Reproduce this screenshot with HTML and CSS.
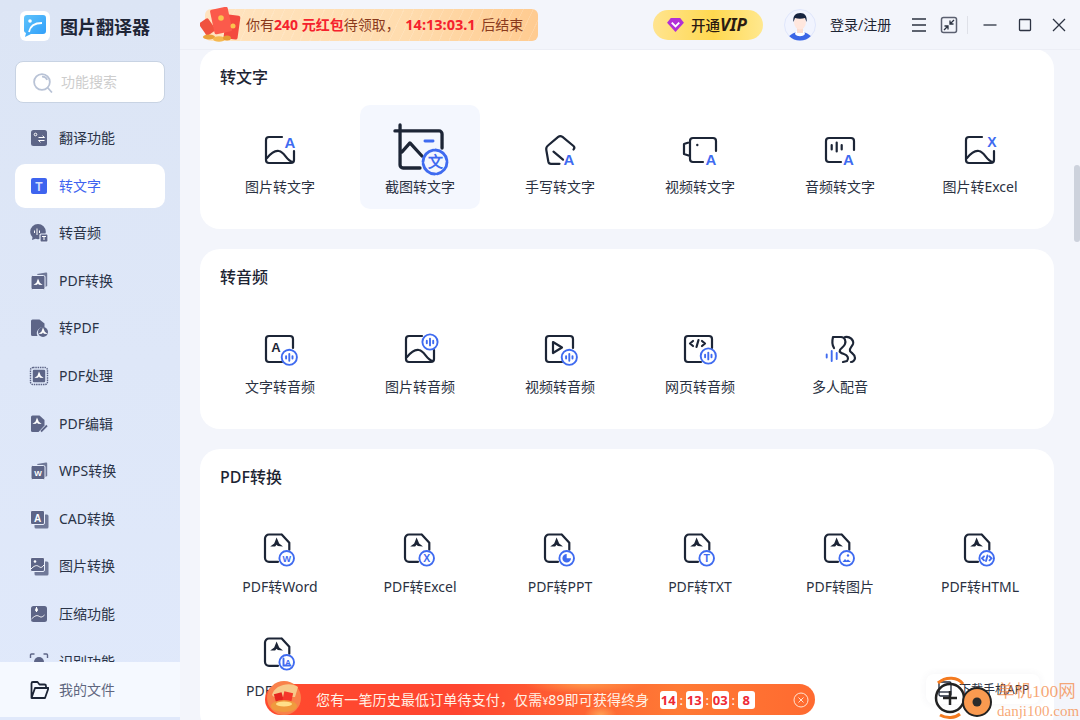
FILE: index.html
```html
<!DOCTYPE html>
<html lang="zh-CN">
<head>
    <meta charset="UTF-8">
    <meta name="viewport" content="width=device-width, initial-scale=1.0">
    <title>图片翻译器</title>
    <link rel="stylesheet" href="styles.css">
</head>
<body>
    <!-- icon sprite -->
    <svg class="sprite" xmlns="http://www.w3.org/2000/svg">
        <defs>
            <g id="b-audio"><circle class="bl" r="7.6" fill="#fff"/><path class="bl" d="M-3.2-1.2v2.4M0-3.4v6.8M3.2-1.2v2.4"/></g>
            <g id="pdf-doc">
                <path class="ln" d="M21.7 4.5H9a4 4 0 0 0-4 4v19.3a4 4 0 0 0 4 4h9M21.7 4.5l7.6 8.2v7"/>
                <path class="df" d="M16.6 7.5l2.6 6 3.8 3-5.200-.4-1.200-1.400-1.500 1.700-4.900.2 4-3z"/>
            </g>
            <g id="mark"><path fill="#fff" d="M0-4.5l1.8 4.3 2.9 2.2-3.8-.3L0 .5-1 1.8l-3.6.2 3-2.2z"/></g>
        </defs>

        <symbol id="ic-pic" viewBox="0 0 40 40">
            <path class="ln" d="M22 7H9a3 3 0 0 0-3 3v20a3 3 0 0 0 3 3h22a3 3 0 0 0 3-3V21"/>
            <path class="ln" d="M7 28c4-5 8-8 12-7 6 1 7 10 14 11"/>
        </symbol>
        <symbol id="ic-crop" viewBox="0 0 40 40">
            <path class="ln" d="M3.3 7.3h29.4a2 2 0 0 1 2 2v9.4M6.7 3.3V30a2 2 0 0 0 2 2H20M8 21.3l5.3-6 8 8.7"/>
            <path class="bl" d="M23.3 14h5.4"/>
            <circle class="bl" cx="30" cy="28" r="8" stroke-dasharray="11 1.6"/>
            <text class="lt" x="30" y="31.6" font-size="10">文</text>
        </symbol>
        <symbol id="ic-hand" viewBox="0 0 40 40">
            <path class="ln" d="M33.5 19.5c1-1 1-2.500 0-3.500l-11-9.200c-1.500-1-3-1-4.300 0L8 15.500c-1.500 1.200-2 3-1.700 4.500l2 11.500c.3 1.500 1.200 2.300 2.700 2.300h8.500"/>
            <path class="ln" d="M13.500 21.700l9.500 8"/>
            <text class="lt" x="29" y="34.500" font-size="15">A</text>
        </symbol>
        <symbol id="ic-video" viewBox="0 0 40 40">
            <path class="ln" d="M10 26.500V11a3 3 0 0 1 3-3h20a3 3 0 0 1 3 3v10M10 26.500V29a3 3 0 0 0 3 3h10M10 12l-6 2v10l6 2"/>
            <circle cx="17.300" cy="15" r="1.200" class="df"/>
            <text class="lt" x="31" y="34.500" font-size="15">A</text>
        </symbol>
        <symbol id="ic-sound" viewBox="0 0 40 40">
            <path class="ln" d="M34 20v-9a3 3 0 0 0-3-3H9a3 3 0 0 0-3 3v18a3 3 0 0 0 3 3h12M11.700 15v4.500M16.700 12.500v9M21.700 15v4.500"/>
            <text class="lt" x="28.500" y="34.500" font-size="15">A</text>
        </symbol>
        <symbol id="ic-frame" viewBox="0 0 40 40">
            <path class="ln" d="M22 32H9a3 3 0 0 1-3-3V9a3 3 0 0 1 3-3h21a3 3 0 0 1 3 3v9"/>
        </symbol>
        <symbol id="ic-voices" viewBox="0 0 40 40">
            <path class="ln" d="M13 7h8c4 0 5 4 4 7-1 3-4 4-5 6-1 2 1 3 4 4 4 1 5 5 3 7l-4 1M13 7c-1 4-1 8 1 11M25 7c5-1 9 3 8 7-1 3-4 4-3 7 1 2 5 3 5 7 0 2-2 4-4 4"/>
            <path class="bl" d="M6.700 24.500v3M11.700 21v10M16.700 23v6"/>
        </symbol>

        <!-- sidebar icons -->
        <symbol id="s-trans" viewBox="0 0 20 20">
            <rect class="sf" x="2" y="2" width="16" height="16" rx="2.500"/>
            <circle cx="6.500" cy="6.500" r="1.300" fill="none" stroke="#fff"/>
            <path fill="none" stroke="#fff" d="M9.500 9.500h6l-2-1.800M15.500 12.500h-6l2 1.800"/>
        </symbol>
        <symbol id="s-text" viewBox="0 0 20 20">
            <rect x="2" y="2" width="16" height="16" rx="2" fill="#3e64ef"/>
            <text x="10" y="14.500" font-size="12" fill="#d5dffc" class="st">T</text>
        </symbol>
        <symbol id="s-audio" viewBox="0 0 20 20">
            <path class="sf" d="M9 1a7.800 7.800 0 0 0-7.800 7.800c0 2.200 1 4 2.300 5.200L3 17l3.500-1.200c1 .3 1.700.4 2.500.4 4.300 0 7.800-3 7.800-7.400A7.800 7.800 0 0 0 9 1z"/>
            <path fill="none" stroke="#fff" d="M5.500 7.500v2.500M8 5.500v6.500M10.500 7.500v2.500"/>
            <rect x="11" y="11" width="8" height="8" rx="1" class="sf" stroke="#e8eefb" stroke-width="1.200"/>
            <path fill="none" stroke="#fff" d="M13 13.500h4M15 13.500v3.500"/>
        </symbol>
        <symbol id="s-pdf" viewBox="0 0 20 20">
            <path class="sf" d="M8 3l9-1.500a1 1 0 0 1 1.200 1V15l-2 1z" opacity=".85"/>
            <rect class="sf" x="2" y="4.500" width="14" height="14" rx="1.500" stroke="#e8eefb"/>
            <use href="#mark" x="9" y="12"/>
        </symbol>
        <symbol id="s-topdf" viewBox="0 0 20 20">
            <path class="sf" d="M3.500 1.500h7l5 4v4a6 6 0 0 0-7 8.500h-5a1.500 1.500 0 0 1-1.500-1.500V3a1.500 1.500 0 0 1 1.500-1.500z"/>
            <circle class="sf" cx="14" cy="14" r="5"/>
            <use href="#mark" x="14" y="14"/>
        </symbol>
        <symbol id="s-chip" viewBox="0 0 20 20">
            <rect x="1.500" y="1.500" width="17" height="17" rx="2.500" fill="none" stroke="#5d6587" stroke-width="1.400" stroke-dasharray="1.500 .8"/>
            <rect class="sf" x="3.800" y="3.800" width="12.400" height="12.400" rx="1.200"/>
            <use href="#mark" x="10" y="10"/>
        </symbol>
        <symbol id="s-edit" viewBox="0 0 20 20">
            <path class="sf" d="M3.500 1.500h7l5 4.500v5.500l-6 6.500h-6A1.500 1.500 0 0 1 2 16.500V3a1.500 1.500 0 0 1 1.500-1.500z"/>
            <use href="#mark" x="8" y="8"/>
            <path fill="none" stroke="#5d6587" stroke-width="1.800" d="M12 17.500l6-6"/>
        </symbol>
        <symbol id="s-wps" viewBox="0 0 20 20">
            <path class="sf" d="M8 3l9-1.500a1 1 0 0 1 1.200 1V15l-2 1z" opacity=".85"/>
            <rect class="sf" x="2" y="4.500" width="14" height="14" rx="1.500" stroke="#e8eefb"/>
            <text x="9" y="15" font-size="8" fill="#fff" class="st">W</text>
        </symbol>
        <symbol id="s-cad" viewBox="0 0 20 20">
            <rect class="sf" x="5.500" y="5.500" width="14" height="14" rx="1.500" opacity=".85"/>
            <rect class="sf" x="1.500" y="1.500" width="14" height="14" rx="1.500" stroke="#e8eefb"/>
            <text x="8.500" y="12.500" font-size="10" fill="#fff" class="st">A</text>
        </symbol>
        <symbol id="s-image" viewBox="0 0 20 20">
            <rect class="sf" x="5.500" y="5.500" width="14" height="14" rx="1.500" opacity=".85"/>
            <rect class="sf" x="1.500" y="1.500" width="14" height="14" rx="1.500" stroke="#e8eefb"/>
            <circle cx="6" cy="5.500" r="1.300" fill="#fff"/>
            <path fill="none" stroke="#fff" d="M2 13c3-3 5-4 7-3s3 3 6-1"/>
        </symbol>
        <symbol id="s-zip" viewBox="0 0 20 20">
            <rect class="sf" x="2" y="2" width="16" height="16" rx="2.500"/>
            <path fill="none" stroke="#fff" d="M2.500 15c3-3 5-4 7-3s3 2 6-1M7.500 3v5"/>
            <rect x="6.200" y="4.500" width="2.600" height="2.600" fill="#fff"/>
        </symbol>
        <symbol id="s-scan" viewBox="0 0 20 20">
            <path fill="none" stroke="#5d6587" stroke-width="1.400" d="M1.500 6V3a1 1 0 0 1 1-1h3M14.500 2h3a1 1 0 0 1 1 1v3"/>
            <circle cx="10" cy="10" r="5" class="sf"/>
        </symbol>
    </svg>

    <div class="app">
        <aside class="sidebar">
            <div class="brand">
                <svg class="brand-logo" viewBox="0 0 30 30">
                    <defs><linearGradient id="lg" x1="0" y1="0" x2="1" y2="1"><stop offset="0" stop-color="#5ec3fb"/><stop offset="1" stop-color="#2f9dfa"/></linearGradient></defs>
                    <rect width="30" height="30" rx="6" fill="#fff"/>
                    <path d="M7 4h16a3 3 0 0 1 3 3v13a3 3 0 0 1-3 3H11l-6 3 1-4a3 3 0 0 1-2-2V7a3 3 0 0 1 3-3z" fill="url(#lg)"/>
                    <circle cx="10" cy="10" r="1.800" fill="#fff"/>
                    <path d="M9 21c1-6 6-9 13-9" fill="none" stroke="#fff" stroke-width="1.800"/>
                </svg>
                <span class="brand-name">图片翻译器</span>
            </div>
            <div class="search">
                <svg class="search-icon" viewBox="0 0 20 20"><circle cx="9.500" cy="9.500" r="7.500"/><path d="M15 15l4 4.500M9.500 4.500a5 5 0 0 1 5 3"/></svg>
                <span class="lift">功能搜索</span>
            </div>
            <nav class="nav">
                <a class="nav-item"><svg class="nav-icon"><use href="#s-trans"/></svg><span class="lift">翻译功能</span></a>
                <a class="nav-item active"><svg class="nav-icon"><use href="#s-text"/></svg><span class="lift">转文字</span></a>
                <a class="nav-item"><svg class="nav-icon"><use href="#s-audio"/></svg><span class="lift">转音频</span></a>
                <a class="nav-item"><svg class="nav-icon"><use href="#s-pdf"/></svg><span class="lift">PDF转换</span></a>
                <a class="nav-item"><svg class="nav-icon"><use href="#s-topdf"/></svg><span class="lift">转PDF</span></a>
                <a class="nav-item"><svg class="nav-icon"><use href="#s-chip"/></svg><span class="lift">PDF处理</span></a>
                <a class="nav-item"><svg class="nav-icon"><use href="#s-edit"/></svg><span class="lift">PDF编辑</span></a>
                <a class="nav-item"><svg class="nav-icon"><use href="#s-wps"/></svg><span class="lift">WPS转换</span></a>
                <a class="nav-item"><svg class="nav-icon"><use href="#s-cad"/></svg><span class="lift">CAD转换</span></a>
                <a class="nav-item"><svg class="nav-icon"><use href="#s-image"/></svg><span class="lift">图片转换</span></a>
                <a class="nav-item"><svg class="nav-icon"><use href="#s-zip"/></svg><span class="lift">压缩功能</span></a>
                <a class="nav-item"><svg class="nav-icon"><use href="#s-scan"/></svg><span class="lift">识别功能</span></a>
            </nav>
            <div class="my-files">
                <svg class="nav-icon" viewBox="0 0 20 20"><path d="M2.500 18V3.500A1.500 1.500 0 0 1 4 2h4.500l2 2.500h5A1.500 1.500 0 0 1 17 6v2M2.500 18h13.500L19.500 8H6z" fill="none" stroke="#1c2536" stroke-width="1.800" stroke-linejoin="round"/></svg>
                <span class="lift">我的文件</span>
            </div>
        </aside>

        <main class="main">
            <header class="topbar">
                <div class="coupon">
                    <svg class="coupon-art" viewBox="0 0 46 36">
                        <rect x="2" y="12" width="11" height="15" rx="2" fill="#f0523f" transform="rotate(-35 8 20)"/>
                        <rect x="25" y="8" width="14" height="24" rx="2" fill="#f4493e" transform="rotate(8 32 20)"/>
                        <rect x="12" y="1" width="18" height="25" rx="2" fill="#fb5a4b" transform="rotate(-12 21 13)"/>
                        <circle cx="21" cy="11" r="2.800" fill="#fbc34f"/>
                        <circle cx="33" cy="19" r="2.500" fill="#fbc34f"/>
                        <ellipse cx="9" cy="30" rx="6" ry="2.500" fill="#eaa23a"/>
                        <ellipse cx="19" cy="32" rx="6" ry="2.800" fill="#f5b950"/>
                        <ellipse cx="27" cy="31" rx="4" ry="2.500" fill="#e79b35"/>
                    </svg>
                    <span class="coupon-text lift">你有<b>240 元红包</b>待领取， <b class="coupon-time">14:13:03.1</b> 后结束</span>
                </div>
                <div class="vip">
                    <svg class="vip-icon" viewBox="0 0 18 16"><path d="M4 1h10l4 5-9 10L0 6z" fill="#b22fd6"/><path d="M5 6l4 4 4-4" fill="none" stroke="#fff" stroke-width="2"/></svg>
                    <span>开通<i>VIP</i></span>
                </div>
                <svg class="avatar" viewBox="0 0 32 32">
                    <clipPath id="av"><circle cx="16" cy="16" r="15.500"/></clipPath>
                    <circle cx="16" cy="16" r="15.500" fill="#f1f4fe" stroke="#dfe6fb"/>
                    <g clip-path="url(#av)">
                        <path d="M3 32c1-6 6-8 10-9h6c4 1 9 3 10 9z" fill="#3b66e6"/>
                        <path d="M11 25c2 3 8 3 10 0l-1-3h-8z" fill="#fff"/>
                        <rect x="13" y="17" width="6" height="7" fill="#fbdcd0"/>
                        <ellipse cx="16" cy="13" rx="6" ry="7.500" fill="#ffe7de"/>
                        <path d="M9.500 13c-1-6 2-9 7-9 4 0 7 3 6 9l-1.500-4c-3 1-7 1-10 0z" fill="#15233f"/>
                    </g>
                </svg>
                <span class="login lift">登录/注册</span>
                <svg class="ctl ctl-menu" viewBox="0 0 20 20"><path d="M3 4h14M3 10h14M3 16h14"/></svg>
                <svg class="ctl ctl-shrink" viewBox="0 0 20 20"><rect x="2.500" y="2.500" width="15" height="15" rx="2" stroke="#5b6070" stroke-width="1.500"/><path d="M15 5l-3.500 3.500M11 5.500V9h3.500M5 15l3.500-3.500M9 14.500V11H5.500"/></svg>
                <span class="ctl-sep"></span>
                <svg class="ctl ctl-min" viewBox="0 0 20 20"><path d="M3.500 10h13"/></svg>
                <svg class="ctl ctl-max" viewBox="0 0 20 20"><rect x="4.500" y="4.500" width="11" height="11" rx=".8"/></svg>
                <svg class="ctl ctl-close" viewBox="0 0 20 20"><path d="M4 4l12 12M16 4L4 16"/></svg>
            </header>

            <div class="content">
                <div class="cards">
                    <section class="card">
                        <h2>转文字</h2>
                        <div class="tools">
                            <a class="tool"><svg class="tool-icon" viewBox="0 0 40 40"><use href="#ic-pic"/><text class="lt" x="30" y="17.500" font-size="15">A</text></svg><span>图片转文字</span></a>
                            <a class="tool hover"><svg class="tool-icon"><use href="#ic-crop"/></svg><span>截图转文字</span></a>
                            <a class="tool"><svg class="tool-icon"><use href="#ic-hand"/></svg><span>手写转文字</span></a>
                            <a class="tool"><svg class="tool-icon"><use href="#ic-video"/></svg><span>视频转文字</span></a>
                            <a class="tool"><svg class="tool-icon"><use href="#ic-sound"/></svg><span>音频转文字</span></a>
                            <a class="tool"><svg class="tool-icon" viewBox="0 0 40 40"><use href="#ic-pic"/><text class="lt" x="32" y="17" font-size="14">X</text></svg><span>图片转Excel</span></a>
                        </div>
                    </section>

                    <section class="card">
                        <h2>转音频</h2>
                        <div class="tools">
                            <a class="tool"><svg class="tool-icon" viewBox="0 0 40 40"><use href="#ic-frame"/><text class="dt" x="16" y="21.500" font-size="13">A</text><use href="#b-audio" x="29.300" y="27.300"/></svg><span>文字转音频</span></a>
                            <a class="tool"><svg class="tool-icon" viewBox="0 0 40 40"><use href="#ic-pic" y="-1"/><use href="#b-audio" x="30" y="12"/></svg><span>图片转音频</span></a>
                            <a class="tool"><svg class="tool-icon" viewBox="0 0 40 40"><use href="#ic-frame"/><path class="ln" d="M13 12l9 5.500-9 5.500z"/><use href="#b-audio" x="29.300" y="27.300"/></svg><span>视频转音频</span></a>
                            <a class="tool"><svg class="tool-icon" viewBox="0 0 40 40"><use href="#ic-frame" x="-1"/><path class="ln" stroke-width="1.800" d="M13 11l-3 2.500 3 2.500M22 11l3 2.500-3 2.500M18.500 10l-2 7"/><use href="#b-audio" x="28.300" y="26"/></svg><span>网页转音频</span></a>
                            <a class="tool"><svg class="tool-icon"><use href="#ic-voices"/></svg><span>多人配音</span></a>
                        </div>
                    </section>

                    <section class="card">
                        <h2>PDF转换</h2>
                        <div class="tools">
                            <a class="tool"><svg class="tool-icon" viewBox="0 0 40 40"><use href="#pdf-doc"/><circle class="bl" cx="26.700" cy="28.300" r="7.300" fill="#fff"/><text class="lt" x="26.700" y="31.500" font-size="9">W</text></svg><span>PDF转Word</span></a>
                            <a class="tool"><svg class="tool-icon" viewBox="0 0 40 40"><use href="#pdf-doc"/><circle class="bl" cx="26.700" cy="28.300" r="7.300" fill="#fff"/><text class="lt" x="26.700" y="32" font-size="10.500">X</text></svg><span>PDF转Excel</span></a>
                            <a class="tool"><svg class="tool-icon" viewBox="0 0 40 40"><use href="#pdf-doc"/><circle class="bl" cx="26.700" cy="28.300" r="7.300" fill="#fff"/><path class="bf" d="M26.700 24a4.300 4.300 0 1 0 4.300 4.300h-4.300z"/></svg><span>PDF转PPT</span></a>
                            <a class="tool"><svg class="tool-icon" viewBox="0 0 40 40"><use href="#pdf-doc"/><circle class="bl" cx="26.700" cy="28.300" r="7.300" fill="#fff"/><text class="lt" x="26.700" y="32" font-size="10.500">T</text></svg><span>PDF转TXT</span></a>
                            <a class="tool"><svg class="tool-icon" viewBox="0 0 40 40"><use href="#pdf-doc"/><circle class="bl" cx="26.700" cy="28.300" r="7.300" fill="#fff"/><path class="bf" d="M22.500 32l2.500-3 1.500 1.500 1.500-1 3 2.500z"/><circle class="bf" cx="28" cy="25.500" r="1.200"/></svg><span>PDF转图片</span></a>
                            <a class="tool"><svg class="tool-icon" viewBox="0 0 40 40"><use href="#pdf-doc"/><circle class="bl" cx="26.700" cy="28.300" r="7.300" fill="#fff"/><path class="bl" stroke-width="1.300" d="M24 26.300l-2 2 2 2M29.500 26.300l2 2-2 2M27.500 25.500l-1.500 5.500"/></svg><span>PDF转HTML</span></a>
                            <a class="tool"><svg class="tool-icon" viewBox="0 0 40 40"><use href="#pdf-doc"/><circle class="bl" cx="26.700" cy="28.300" r="7.300" fill="#fff"/><path class="bl" stroke-width="1" d="M23.500 24.500v7h7"/><text class="lt" x="28" y="30.500" font-size="7.500">A</text></svg><span>PDF转长图</span></a>
                        </div>
                    </section>
                </div>
            </div>

            <div class="scrollbar"></div>
        </main>

        <!-- floating bits over the page -->
        <div class="promo">
            <svg class="promo-art" viewBox="0 0 38 38">
                <circle cx="19" cy="20" r="17" fill="#f9814a"/>
                <path d="M7 17c2-10 18-14 26-8l-3 10H9z" fill="#f7c98a"/>
                <rect x="10" y="15" width="8" height="10" fill="#e5261f" transform="rotate(-15 14 20)"/>
                <rect x="18" y="14" width="9" height="11" fill="#f5382a" transform="rotate(12 22 20)"/>
                <ellipse cx="19" cy="28" rx="13" ry="6" fill="#f09a3e"/>
                <ellipse cx="19" cy="26" rx="8" ry="2.500" fill="#ffe08a"/>
            </svg>
            <span class="promo-text lift">您有一笔历史最低订单待支付，仅需<small>¥</small>89即可获得终身</span>
            <div class="timer">
                <b>14</b><i>:</i><b>13</b><i>:</i><b>03</b><i>:</i><b>8</b>
            </div>
            <svg class="promo-close" viewBox="0 0 16 16"><circle cx="8" cy="8" r="7"/><path d="M5.500 5.500l5 5M10.500 5.500l-5 5"/></svg>
        </div>

        <div class="app-chip">
            <svg class="chip-icon" viewBox="0 0 16 16"><rect x="2" y="1" width="12" height="14" rx="1.500"/><path d="M2 11h12"/></svg>
            <span>下载手机APP</span>
        </div>

        <div class="watermark">
            <svg class="wm-logo" viewBox="0 0 67 45">
                <path d="M8 8c8-7 20-6 25 1M10 40c7 4 15 3 20-1" fill="none" stroke="#f47a1f" stroke-width="3"/>
                <circle cx="20" cy="23" r="14" fill="none" stroke="#222" stroke-width="2.500"/>
                <path d="M20 16v14M13 23h14" stroke="#222" stroke-width="2.500"/>
                <circle cx="47" cy="27" r="14" fill="#fa9a50" stroke="#222" stroke-width="2"/>
                <circle cx="47" cy="27" r="4.500" fill="#2b2b2b"/>
            </svg>
            <div class="wm-text">
                <span class="wm-title">单机100网</span>
                <span class="wm-url">danji100.com</span>
            </div>
        </div>
    </div>
</body>
</html>
```

FILE: styles.css
```css
* {
    box-sizing: border-box;
}
html, body {
    margin: 0;
    padding: 0;
    height: 100%;
    overflow: hidden;
}
body {
    font-family: "Noto Sans", "Noto Sans CJK SC", sans-serif;
    font-size: 14px;
    color: #1d2433;
}
.sprite {
    display: none;
}
/* this font sits a pixel low next to the icons */
.lift {
    padding-bottom: 2px;
}

/* svg parts, used from the sprite */
.ln {
    fill: none;
    stroke: #1c2536;
    stroke-width: 2.2;
    stroke-linecap: round;
    stroke-linejoin: round;
}
.bl {
    stroke: #3f6bf0;
    stroke-width: 1.9;
    stroke-linecap: round;
    fill: none;
}
.bf {
    fill: #3f6bf0;
}
.df {
    fill: #1c2536;
}
.sf {
    fill: #5d6587;
}
.lt, .dt, .st {
    font-family: "Liberation Sans", sans-serif;
    font-weight: 700;
    text-anchor: middle;
    stroke: none;
}
.lt {
    fill: #3f6bf0;
}
.dt {
    fill: #1c2536;
}

.app {
    position: relative;
    display: flex;
    width: 1080px;
    height: 720px;
    overflow: hidden;
    background-color: #f3f5fb;
}

/* sidebar */
.sidebar {
    display: flex;
    flex-direction: column;
    flex: 0 0 180px;
    padding-bottom: 3px;
    background: linear-gradient(180deg, #dce5f5 0%, #e0e9fb 100%);
}
.brand {
    display: flex;
    align-items: center;
    gap: 10px;
    height: 51px;
    padding-left: 20px;
}
.brand-logo {
    width: 30px;
    height: 30px;
}
.brand-name {
    font-size: 18px;
    font-weight: 700;
    color: #1e2536;
}
.search {
    display: flex;
    align-items: center;
    gap: 8px;
    height: 42px;
    margin: 10px 15px 13px;
    padding-left: 16px;
    background-color: #fff;
    border: 1px solid #c8d3e3;
    border-radius: 8px;
    color: #cdcdcd;
}
.search-icon {
    width: 21px;
    height: 21px;
    fill: none;
    stroke: #b9c3d6;
    stroke-width: 1.700;
}
.nav {
    flex: 1;
    min-height: 0;
    overflow: hidden;
    display: flex;
    flex-direction: column;
    gap: 3.600px;
    padding: 0 15px;
}
.nav-item {
    flex: 0 0 44px;
    display: flex;
    align-items: center;
    gap: 10px;
    padding-left: 14px;
    border-radius: 10px;
    color: #2a3347;
}
.nav-item.active {
    background-color: #fff;
    color: #3e64ef;
}
.nav-icon {
    width: 20px;
    height: 20px;
    flex: none;
}
.my-files {
    flex: 0 0 55px;
    display: flex;
    align-items: center;
    gap: 10px;
    padding-left: 29px;
    background-color: #f5f9ff;
    color: #5f6780;
}

/* main column */
.main {
    position: relative;
    flex: 1;
    min-width: 0;
    display: flex;
    flex-direction: column;
}
.topbar {
    flex: 0 0 50px;
    display: flex;
    align-items: center;
    padding-left: 25px;
    border-bottom: 1px solid #eceef5;
}
.coupon {
    display: flex;
    align-items: center;
    width: 333px;
    height: 32px;
    background:
        repeating-linear-gradient(115deg, rgba(255, 255, 255, 0.14) 0 1px, transparent 1px 9px),
        linear-gradient(90deg, #ffe4c0 0%, #ffdcae 60%, #ffcb90 100%);
    border-radius: 6px;
    color: #8a3a1c;
}
.coupon-art {
    flex: none;
    width: 46px;
    height: 36px;
    margin-left: -5px;
}
.coupon-text {
    white-space: pre;
}
.coupon-text b {
    color: #f5222d;
    font-weight: 700;
}
.coupon-text .coupon-time {
    margin: 0 2px;
    font-size: 14.500px;
}
.vip {
    display: flex;
    align-items: center;
    gap: 7px;
    width: 110px;
    height: 30px;
    margin-left: 115px;
    padding-left: 14px;
    border-radius: 15px;
    background: linear-gradient(90deg, #ffe48f 0%, #ffd850 55%, #ffe88f 100%);
    font-size: 14.500px;
    font-weight: 500;
    color: #2b1b12;
}
.vip-icon {
    width: 17px;
    height: 15px;
}
.vip i {
    font-size: 17px;
    font-weight: 700;
}
.avatar {
    width: 32px;
    height: 32px;
    margin-left: 21px;
}
.login {
    margin-left: 14px;
    color: #1d2433;
    white-space: nowrap;
}
.ctl {
    flex: none;
    width: 20px;
    height: 20px;
    fill: none;
    stroke: #2c3342;
    stroke-width: 1.300;
}
.ctl-menu {
    margin-left: 18px;
}
.ctl-shrink {
    margin-left: 10px;
}
.ctl-sep {
    width: 1px;
    height: 18px;
    margin-left: 8px;
    background-color: #dfe1e8;
}
.ctl-min {
    margin-left: 12px;
}
.ctl-max {
    margin-left: 15px;
}
.ctl-close {
    margin-left: 14px;
}

.content {
    flex: 1;
    min-height: 0;
    overflow: hidden;
    padding: 0 26px 0 20px;
}
.cards {
    display: flex;
    flex-direction: column;
    gap: 20px;
    margin-top: -1px;
}
.card {
    padding: 0 20px 20px;
    background-color: #fff;
    border-radius: 20px;
}
.card h2 {
    height: 56px;
    margin: 0;
    font-size: 16px;
    font-weight: 500;
    line-height: 56px;
}
.tools {
    display: grid;
    grid-template-columns: repeat(6, 120px);
    column-gap: 20px;
    grid-auto-rows: 104px;
}
.tool {
    display: flex;
    flex-direction: column;
    align-items: center;
    padding-top: 25px;
    border-radius: 10px;
    color: #2a3142;
}
.tool span {
    margin-top: 7px;
    line-height: 20px;
    white-space: nowrap;
}
.tool-icon {
    flex: none;
    width: 40px;
    height: 40px;
    overflow: visible;
}
.tool.hover {
    background-color: #f4f7fe;
}
.tool.hover .tool-icon {
    transform: scale(1.5);
}

.scrollbar {
    position: absolute;
    top: 165px;
    right: 0;
    width: 6px;
    height: 77px;
    border-radius: 3px;
    background-color: #cdd2dc;
}

/* promo strip along the bottom */
.promo {
    position: absolute;
    left: 265px;
    top: 684px;
    display: flex;
    align-items: center;
    width: 550px;
    height: 31px;
    border-radius: 16px;
    background:
        radial-gradient(ellipse 60px 10px at 58% 0, rgba(255, 190, 90, 0.55), transparent),
        radial-gradient(ellipse 16px 10px at 61% 100%, rgba(255, 200, 110, 0.6), transparent),
        linear-gradient(90deg, #ff4a2e 0%, #ff4530 35%, #ff7a35 75%, #ff6a30 100%);
    color: #fff;
}
.promo-art {
    flex: none;
    width: 38px;
    height: 38px;
    margin-top: -5px;
}
.promo-text {
    margin-left: 13px;
    white-space: nowrap;
    letter-spacing: 0.15px;
    color: #fff2e6;
}
.promo-text small {
    font-size: 10px;
}
.timer {
    display: flex;
    align-items: center;
    margin-left: 10px;
}
.timer b {
    width: 17.500px;
    height: 18px;
    border-radius: 3px;
    background-color: #fff;
    color: #ee2a35;
    font-size: 13px;
    line-height: 18px;
    text-align: center;
}
.timer i {
    width: 8.500px;
    font-style: normal;
    font-size: 13px;
    text-align: center;
}
.promo-close {
    width: 16px;
    height: 16px;
    margin-left: 38px;
    fill: none;
    stroke: #ffe3d0;
}

.app-chip {
    position: absolute;
    left: 926px;
    top: 674px;
    display: flex;
    align-items: center;
    gap: 6px;
    width: 114px;
    height: 30px;
    padding-left: 11px;
    background-color: #fff;
    border-radius: 8px;
    box-shadow: 0 0 8px rgba(60, 70, 100, 0.06);
    font-size: 12px;
    color: #2a3142;
}
.chip-icon {
    width: 16px;
    height: 16px;
    fill: none;
    stroke: #1c2536;
    stroke-width: 1.300;
}

.watermark {
    position: absolute;
    left: 930px;
    top: 675px;
    display: flex;
}
.wm-logo {
    width: 67px;
    height: 45px;
}
.wm-text {
    display: flex;
    flex-direction: column;
    padding-top: 4px;
    font-family: "Liberation Serif", "Noto Sans CJK SC", serif;
    color: rgba(243, 125, 50, 0.68);
    white-space: nowrap;
}
.wm-title {
    font-size: 17.500px;
    line-height: 24px;
}
.wm-url {
    font-size: 15px;
    line-height: 17px;
}
```
